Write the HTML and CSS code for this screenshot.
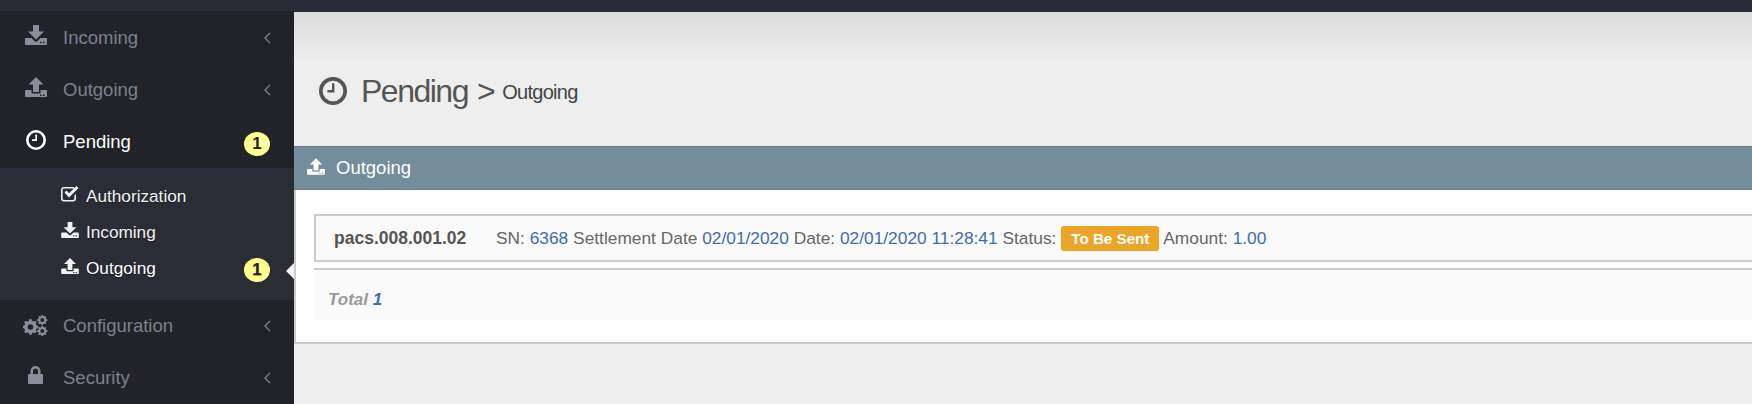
FILE: index.html
```html
<!DOCTYPE html>
<html lang="en">
<head>
    <meta charset="UTF-8">
    <meta name="viewport" content="width=device-width, initial-scale=1.0">
    <title>Pending Outgoing</title>
    <link rel="stylesheet" href="styles.css">
</head>
<body>
    <svg class="defs" width="0" height="0">
        <symbol id="i-down" viewBox="0 0 22 20"><path d="M8 0h6v6.500h5L11 14.500 3 6.500h5z"/><path fill-rule="evenodd" d="M1 13h5.500l3 3a2 2 0 0 0 3 0l3-3H21a1 1 0 0 1 1 1v5a1 1 0 0 1-1 1H1a1 1 0 0 1-1-1v-5a1 1 0 0 1 1-1zM15 16.700h1.600v1.500H15zM18 16.700h1.600v1.500H18z"/></symbol>
        <symbol id="i-up" viewBox="0 0 22 20"><path d="M11 0l7.500 7.500H14V15H8V7.500H3.500z"/><path fill-rule="evenodd" d="M1 13h5.500v2.500a1 1 0 0 0 1 1h7a1 1 0 0 0 1-1V13H21a1 1 0 0 1 1 1v5a1 1 0 0 1-1 1H1a1 1 0 0 1-1-1v-5a1 1 0 0 1 1-1zM15 17.500h1.600V19H15zM18 17.500h1.600V19H18z"/></symbol>
        <symbol id="i-clock" viewBox="0 0 20 20"><path d="M10 0a10 10 0 1 0 0 20 10 10 0 0 0 0-20zm0 2.600a7.400 7.400 0 1 1 0 14.800 7.400 7.400 0 0 1 0-14.800zM9.300 4.500h1.700v6.500H6v-1.700h3.300z" fill-rule="evenodd"/></symbol>
        <symbol id="i-check" viewBox="0 0 18 16"><path d="M3 1h10v1.600H3A1.400 1.400 0 0 0 1.600 4v8.500A1.400 1.400 0 0 0 3 13.900h9a1.400 1.400 0 0 0 1.400-1.400V9.500L15 8v4.500a3 3 0 0 1-3 3H3a3 3 0 0 1-3-3V4a3 3 0 0 1 3-3z"/><path d="M3.500 6.500L5.500 4.600 8 7.200 15.300 0 17.500 2.100 8 11.500z"/></symbol>
        <symbol id="i-cogs" viewBox="0 0 25 21"><path fill-rule="evenodd" d="M7 4l1.500.2.600 1.800 1.400.6 1.700-.9 1.500 1.500-.9 1.700.6 1.400 1.900.6v2.200l-1.900.6-.6 1.400.9 1.700-1.500 1.500-1.700-.9-1.400.6-.6 1.800H6.400l-.6-1.800-1.400-.6-1.700.9-1.500-1.500.9-1.700-.6-1.400L0 13.100v-2.200l1.500-.6.600-1.400-.9-1.700 1.500-1.500 1.700.9 1.400-.6.600-1.800zM7.500 9.200a2.800 2.800 0 1 0 0 5.600 2.800 2.800 0 0 0 0-5.600z"/><path fill-rule="evenodd" d="M18.500 0H20l.3 1.200 1 .4 1-.6 1 1-.6 1 .4 1 1.400.4v1.400l-1.400.4-.4 1 .6 1-1 1-1-.6-1 .4-.3 1.200h-1.500l-.3-1.200-1-.4-1 .6-1-1 .6-1-.4-1-1.400-.4V4.400l1.400-.4.4-1-.6-1 1-1 1 .6 1-.4zM19.300 3.100a2 2 0 1 0 0 4 2 2 0 0 0 0-4zM18.500 11H20l.3 1.200 1 .4 1-.6 1 1-.6 1 .4 1 1.400.4v1.400l-1.400.4-.4 1 .6 1-1 1-1-.6-1 .4-.3 1.200h-1.500l-.3-1.200-1-.4-1 .6-1-1 .6-1-.4-1-1.400-.4v-1.400l1.400-.4.4-1-.6-1 1-1 1 .6 1-.4zM19.300 14.100a2 2 0 1 0 0 4 2 2 0 0 0 0-4z"/></symbol>
        <symbol id="i-lock" viewBox="0 0 15 18"><path fill-rule="evenodd" d="M7.500 0A5 5 0 0 1 12.500 5v3H14a1 1 0 0 1 1 1v8a1 1 0 0 1-1 1H1a1 1 0 0 1-1-1V9a1 1 0 0 1 1-1h1.500V5A5 5 0 0 1 7.500 0zm0 2.500A2.500 2.500 0 0 0 5 5v3h5V5a2.500 2.500 0 0 0-2.500-2.500z"/></symbol>
    </svg>

    <div class="topbar"></div>
    <div class="layout">
        <aside class="sidebar">
            <a class="nav-item">
                <svg class="nav-icon"><use href="#i-down"/></svg>
                <span class="nav-label">Incoming</span>
                <svg class="chevron" viewBox="0 0 7 12"><path d="M6 1L1 6l5 5"/></svg>
            </a>
            <a class="nav-item">
                <svg class="nav-icon"><use href="#i-up"/></svg>
                <span class="nav-label">Outgoing</span>
                <svg class="chevron" viewBox="0 0 7 12"><path d="M6 1L1 6l5 5"/></svg>
            </a>
            <a class="nav-item active">
                <svg class="nav-icon clock"><use href="#i-clock"/></svg>
                <span class="nav-label">Pending</span>
                <span class="badge">1</span>
                <svg class="chevron-down" viewBox="0 0 12 7"><path d="M1 1l5 5 5-5"/></svg>
            </a>
            <div class="submenu">
                <a class="sub-item">
                    <svg class="sub-icon"><use href="#i-check"/></svg>
                    <span>Authorization</span>
                </a>
                <a class="sub-item">
                    <svg class="sub-icon"><use href="#i-down"/></svg>
                    <span>Incoming</span>
                </a>
                <a class="sub-item current">
                    <svg class="sub-icon"><use href="#i-up"/></svg>
                    <span>Outgoing</span>
                    <span class="badge">1</span>
                </a>
            </div>
            <a class="nav-item">
                <svg class="nav-icon cogs"><use href="#i-cogs"/></svg>
                <span class="nav-label">Configuration</span>
                <svg class="chevron" viewBox="0 0 7 12"><path d="M6 1L1 6l5 5"/></svg>
            </a>
            <a class="nav-item">
                <svg class="nav-icon lock"><use href="#i-lock"/></svg>
                <span class="nav-label">Security</span>
                <svg class="chevron" viewBox="0 0 7 12"><path d="M6 1L1 6l5 5"/></svg>
            </a>
        </aside>

        <main class="content">
            <h1 class="page-title">
                <svg class="title-icon"><use href="#i-clock"/></svg>
                <span>Pending</span>
                <span class="sep">&gt;</span>
                <small>Outgoing</small>
            </h1>
            <section class="panel">
                <div class="panel-heading">
                    <svg class="panel-icon"><use href="#i-up"/></svg>
                    <span>Outgoing</span>
                </div>
                <div class="panel-body">
                    <div class="message-row">
                        <strong class="msg-type">pacs.008.001.02</strong>
                        <span>SN: <a>6368</a> Settlement Date <a>02/01/2020</a> Date: <a>02/01/2020 11:28:41</a> Status: <span class="label">To Be Sent</span> Amount: <a>1.00</a></span>
                    </div>
                    <div class="total-row"><em>Total <a>1</a></em></div>
                </div>
            </section>
        </main>
    </div>
</body>
</html>
```

FILE: styles.css
```css
body {
    font-family: "Liberation Sans", Arial, sans-serif;
    margin: 0;
    height: 404px;
    overflow: hidden;
    background-color: #f0f0f0;
    color: #666;
}
.defs {
    display: block;
    height: 0;
}
.topbar {
    height: 12px;
    background-color: #292c34;
}
.layout {
    display: flex;
    height: 392px;
}
.sidebar {
    width: 294px;
    flex: none;
    background-color: #212328;
    box-shadow: 0 -1px 0 #212328;
}
.nav-item {
    display: flex;
    align-items: center;
    height: 52px;
    padding-left: 25px;
    color: #7d818e;
    font-size: 18.500px;
}
.nav-icon {
    width: 22px;
    height: 20px;
    margin-top: -6px;
    margin-right: 16px;
    fill: #8a8d9c;
    flex: none;
}
.nav-icon.clock {
    width: 20px;
    fill: #fff;
    margin-top: -4px;
    margin-left: 1px;
    margin-right: 17px;
}
.nav-icon.cogs {
    width: 25px;
    height: 21px;
    margin-top: -2px;
    margin-left: -2px;
    margin-right: 15px;
}
.nav-icon.lock {
    width: 15px;
    height: 18px;
    margin-left: 3px;
    margin-right: 20px;
}
.nav-label {
    flex: 1;
}
.chevron {
    width: 7px;
    height: 12px;
    margin-right: 23px;
    fill: none;
    stroke: #7d818e;
    stroke-width: 1.300;
}
.nav-item.active {
    position: relative;
    color: #fff;
}
.chevron-down {
    position: absolute;
    right: 24px;
    top: 24px;
    width: 10px;
    height: 6px;
    fill: none;
    stroke: #fff;
    stroke-width: 1.300;
}
.badge {
    width: 26px;
    height: 24px;
    margin-top: 3px;
    margin-right: 24px;
    border-radius: 50%;
    background-color: #ffff8e;
    color: #222;
    font-size: 17px;
    font-weight: bold;
    line-height: 24px;
    text-align: center;
    flex: none;
}
.submenu {
    padding: 10px 0 14px;
    background-color: #2a2d35;
}
.sub-item {
    display: flex;
    align-items: center;
    height: 36px;
    padding-left: 61px;
    color: #f2f2f2;
    font-size: 17.200px;
    text-shadow: 0 1px 1px rgba(0,0,0,0.4);
}
.sub-item span:first-of-type {
    flex: 1;
}
.sub-icon {
    width: 18px;
    height: 16px;
    margin-top: -4px;
    margin-right: 7px;
    fill: #f2f2f2;
    flex: none;
}
.sub-item.current {
    position: relative;
    color: #fff;
}
.sub-item.current::after {
    content: "";
    position: absolute;
    right: 0;
    top: 13px;
    border: 8px solid transparent;
    border-left: 0;
    border-right-color: #f4f4f4;
}
.content {
    flex: 1;
    min-width: 0;
    background-image:
        linear-gradient(#dcdcdc, rgba(240,240,240,0) 50px),
        url("data:image/svg+xml,%3Csvg xmlns='http://www.w3.org/2000/svg' width='300' height='300'%3E%3Cfilter id='n'%3E%3CfeTurbulence type='fractalNoise' baseFrequency='0.35' numOctaves='3'/%3E%3CfeColorMatrix values='0 0 0 0 0.5 0 0 0 0 0.5 0 0 0 0 0.5 0.06 0 0 0 0'/%3E%3C/filter%3E%3Crect width='300' height='300' filter='url(%23n)'/%3E%3C/svg%3E");
}
.page-title {
    display: flex;
    align-items: center;
    box-sizing: border-box;
    height: 134px;
    margin: 0;
    padding: 24px 0 0 25px;
    color: #555;
    font-size: 32px;
    font-weight: normal;
    letter-spacing: -1.500px;
}
.title-icon {
    width: 28px;
    height: 28px;
    margin-right: 14px;
    fill: #555;
}
.sep {
    margin: 0 8px 0 9px;
}
.page-title small {
    color: #444;
    font-size: 20px;
    letter-spacing: -0.700px;
    padding-top: 3px;
}
.panel {
    border-left: 2px solid #ccc;
    border-bottom: 2px solid #ccc;
    background-color: #fff;
}
.panel-heading {
    display: flex;
    align-items: center;
    height: 42px;
    margin-left: -2px;
    padding-left: 13px;
    background-color: #738d9b;
    border-top: 1px solid #68808d;
    border-bottom: 1px solid #68808d;
    color: #fff;
    font-size: 18.500px;
}
.panel-icon {
    width: 18px;
    height: 17px;
    margin-top: -3px;
    margin-right: 11px;
    fill: #fff;
}
.panel-body {
    padding: 24px 0 22px 18px;
}
.message-row {
    display: flex;
    align-items: center;
    height: 44px;
    border: 2px solid #ccc;
    border-right: 0;
    background-color: #fafafa;
    font-size: 17.330px;
}
.msg-type {
    width: 162px;
    padding-left: 18px;
    color: #555;
    font-size: 17.500px;
    flex: none;
}
.message-row a,
.total-row a {
    color: #3f6cae;
}
.label {
    display: inline-block;
    padding: 4px 10px;
    border-radius: 3px;
    background-color: #eba528;
    color: #fff;
    font-size: 15.200px;
    font-weight: bold;
}
.total-row {
    display: flex;
    align-items: center;
    height: 40px;
    margin-top: 6px;
    padding: 10px 0 0 14px;
    border-top: 2px solid #ccc;
    background-color: #fafafa;
    color: #999;
    font-size: 17px;
    font-weight: bold;
}
```
